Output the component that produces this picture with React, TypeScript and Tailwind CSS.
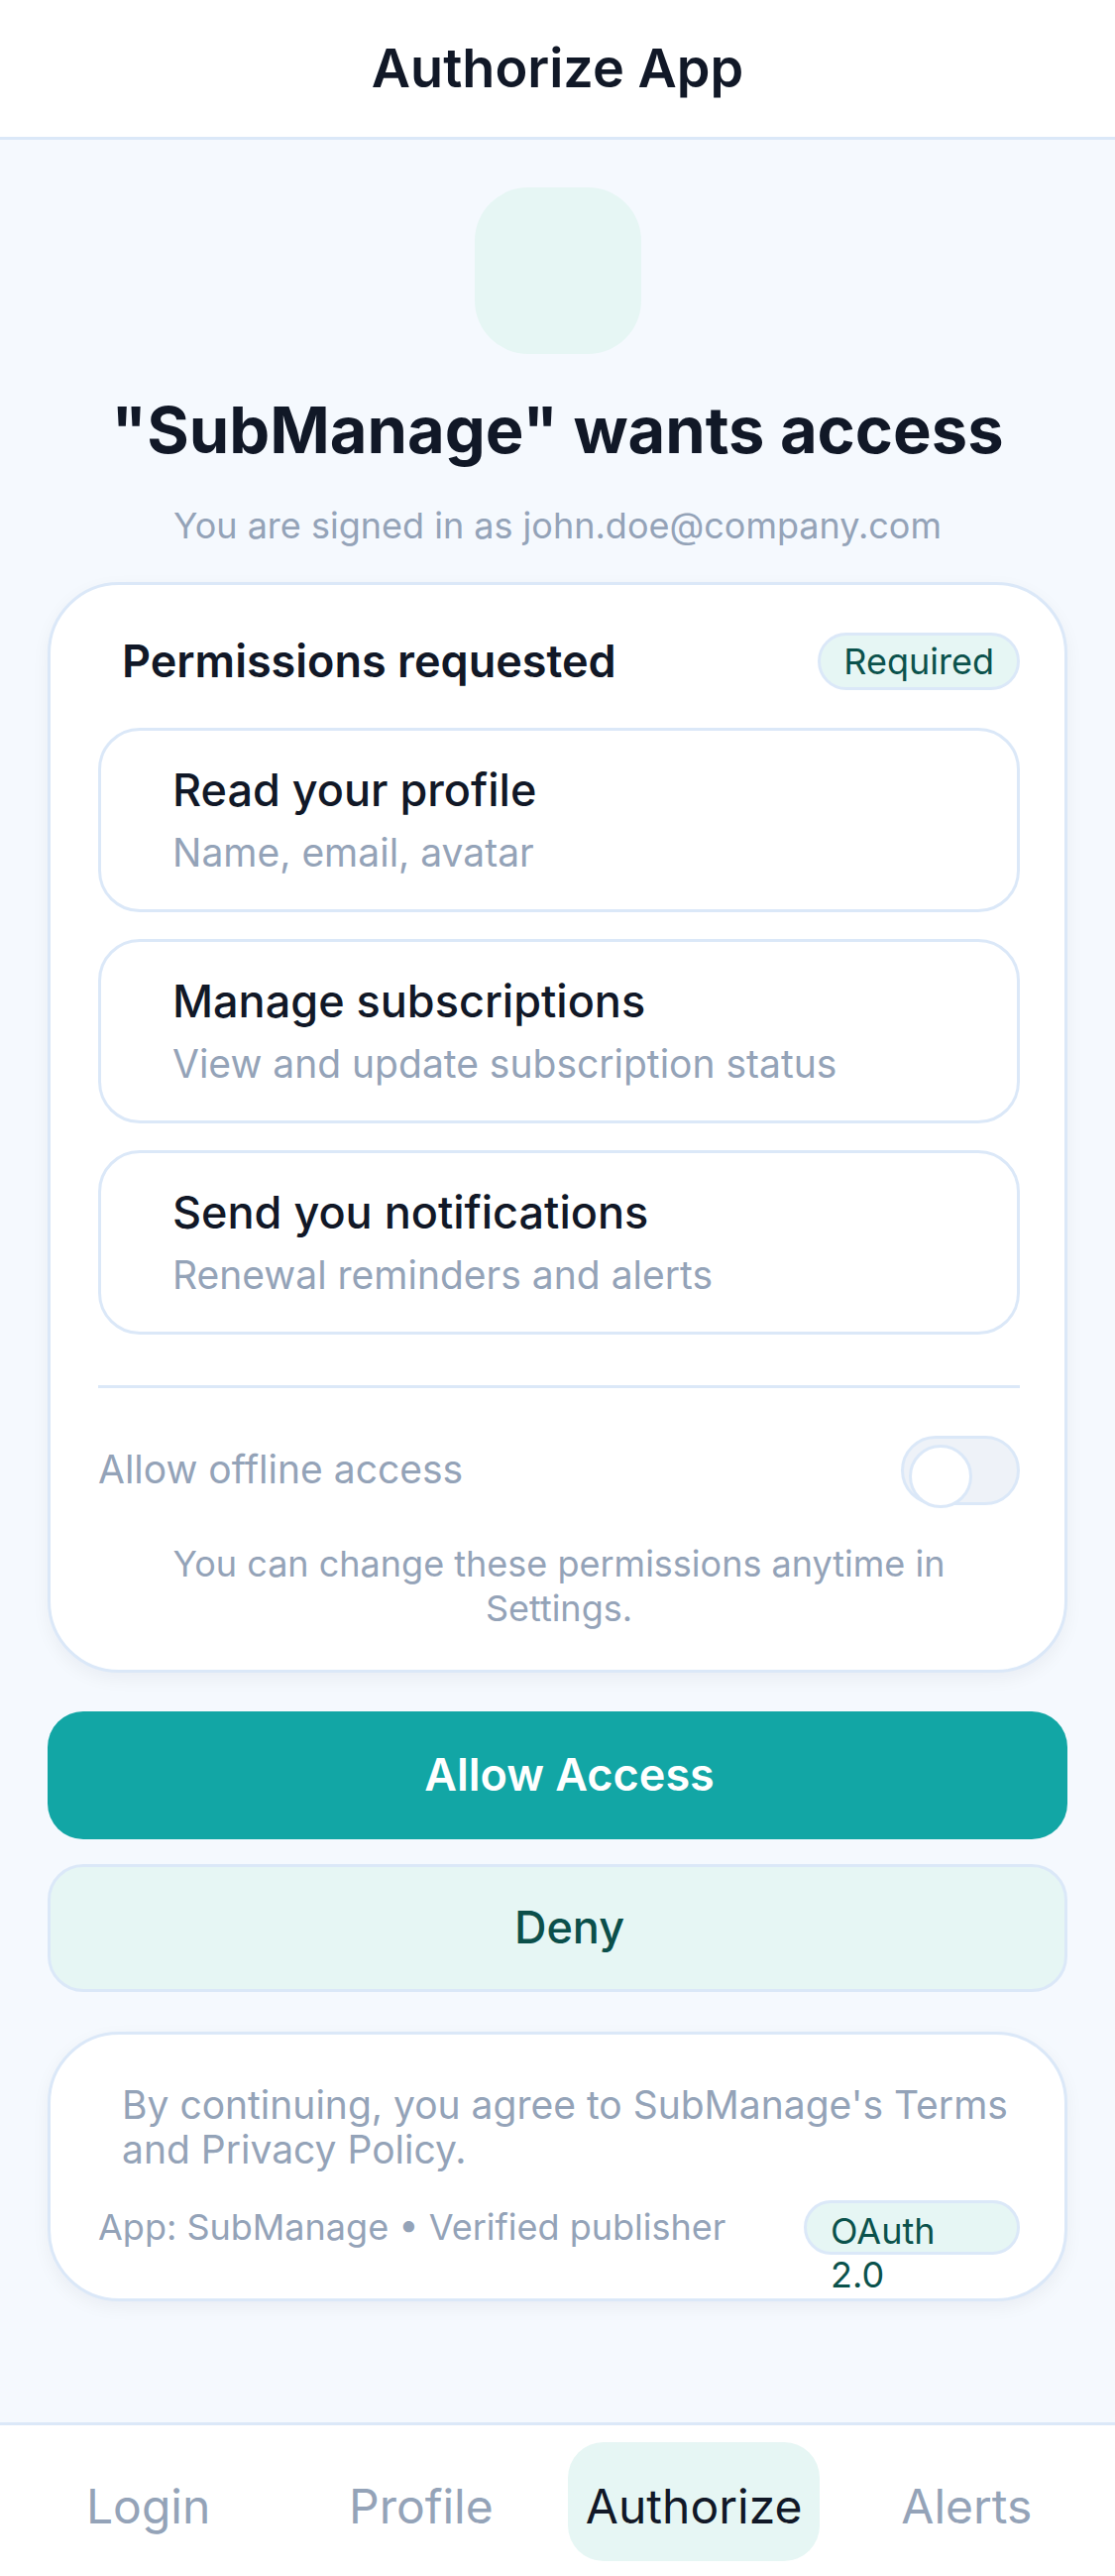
import { useState } from 'react';

const permissions = [
  { title: 'Read your profile', desc: 'Name, email, avatar' },
  { title: 'Manage subscriptions', desc: 'View and update subscription status' },
  { title: 'Send you notifications', desc: 'Renewal reminders and alerts' },
];

const tabs = ['Login', 'Profile', 'Authorize', 'Alerts'];

export default function App() {
  const [offline, setOffline] = useState(false);
  const active = 'Authorize';

  return (
    <div className="min-h-screen flex flex-col bg-[#f5f9fe] font-[Inter,sans-serif] text-[#111827]">
      {/* header */}
      <header className="h-[141px] bg-white border-b-[3px] border-[#dbe8f8] flex items-center justify-center">
        <h1 className="text-[54px] font-semibold leading-none">Authorize App</h1>
      </header>

      <main className="flex-1 flex flex-col px-[48px] pt-[48px]">
        <div className="mx-auto w-[168px] h-[168px] rounded-[54px] bg-[#e6f6f4]" />
        <h2 className="mt-[36px] text-center text-[65px] font-bold leading-[1.27]">"SubManage" wants access</h2>
        <p className="mt-[30px] text-center text-[36px] leading-[48px] text-[#94a3b8]">
          You are signed in as john.doe@company.com
        </p>

        {/* permissions card */}
        <section className="mt-[33px] bg-white border-[3px] border-[#dbe8f8] rounded-[72px] pl-[48px] pr-[45px] pt-[48px] pb-[39px] shadow-[0_6px_18px_rgba(15,23,42,0.05)]">
          <div className="flex items-center justify-between pl-[24px]">
            <span className="text-[45px] font-semibold leading-none">Permissions requested</span>
            <span className="h-[58px] px-[23px] flex items-center rounded-full bg-[#e6f6f4] border-[3px] border-[#dbe8f8] text-[36px] text-[#0b524c]">
              Required
            </span>
          </div>

          <div className="mt-[38px] flex flex-col gap-[27px]">
            {permissions.map((p) => (
              <div key={p.title} className="border-[3px] border-[#dbe8f8] rounded-[42px] pl-[72px] pr-[30px] py-[30px]">
                <div className="text-[45px] font-medium leading-[60px]">{p.title}</div>
                <div className="mt-[6px] text-[39px] leading-[54px] text-[#94a3b8]">{p.desc}</div>
              </div>
            ))}
          </div>

          <div className="mt-[51px] border-t-[3px] border-[#dbe8f8] pt-[48px]">
            <div className="flex items-center justify-between">
              <span className="text-[39px] text-[#94a3b8]">Allow offline access</span>
              <button
                onClick={() => setOffline(!offline)}
                className="relative w-[120px] h-[70px] rounded-full bg-[#eef2f8] border-[3px] border-[#dbe8f8]"
              >
                <span
                  className={
                    offline
                      ? 'absolute left-[50px] top-[6px] w-[64px] h-[64px] rounded-full bg-white border-[3px] border-[#dbe8f8]'
                      : 'absolute left-[5px] top-[6px] w-[64px] h-[64px] rounded-full bg-white border-[3px] border-[#dbe8f8]'
                  }
                />
              </button>
            </div>
            <p className="mt-[37px] px-[30px] text-center text-[36px] leading-[45px] text-[#94a3b8]">
              You can change these permissions anytime in Settings.
            </p>
          </div>
        </section>

        {/* actions */}
        <button className="mt-[39px] h-[129px] pl-[24px] rounded-[36px] bg-[#12a6a5] text-white text-[45px] font-semibold">
          Allow Access
        </button>
        <button className="mt-[25px] h-[129px] pl-[24px] rounded-[36px] bg-[#e6f6f4] border-[3px] border-[#dbe8f8] text-[#0b4f4a] text-[45px] font-medium">
          Deny
        </button>

        {/* footer card */}
        <section className="mt-[40px] bg-white border-[3px] border-[#dbe8f8] rounded-[72px] pl-[48px] pr-[45px] pt-[48px] pb-[44px] shadow-[0_6px_18px_rgba(15,23,42,0.05)]">
          <p className="pl-[24px] text-[39px] leading-[45px] text-[#94a3b8]">
            By continuing, you agree to SubManage's Terms and Privacy Policy.
          </p>
          <div className="mt-[29px] flex items-center justify-between">
            <span className="text-[36px] text-[#94a3b8]">App: SubManage • Verified publisher</span>
            <span className="w-[218px] h-[55px] shrink-0 px-[24px] py-[6px] rounded-full bg-[#e6f6f4] border-[3px] border-[#dbe8f8] text-[36px] leading-[44px] text-[#0b524c]">
              OAuth 2.0
            </span>
          </div>
        </section>
        <div className="h-[120px]" />
      </main>

      {/* bottom nav */}
      <nav className="bg-white border-t-[3px] border-[#dbe8f8] grid grid-cols-4 px-[12px] pt-[17px] pb-[15px]">
        {tabs.map((t) => (
          <div key={t} className="flex justify-center">
            <button
              className={
                t === active
                  ? 'h-[120px] px-[18px] pt-[10px] rounded-[36px] bg-[#e6f6f4] text-[48px] text-[#111827]'
                  : 'h-[120px] px-[18px] pt-[10px] rounded-[36px] text-[48px] text-[#94a3b8]'
              }
            >
              {t}
            </button>
          </div>
        ))}
      </nav>
    </div>
  );
}
